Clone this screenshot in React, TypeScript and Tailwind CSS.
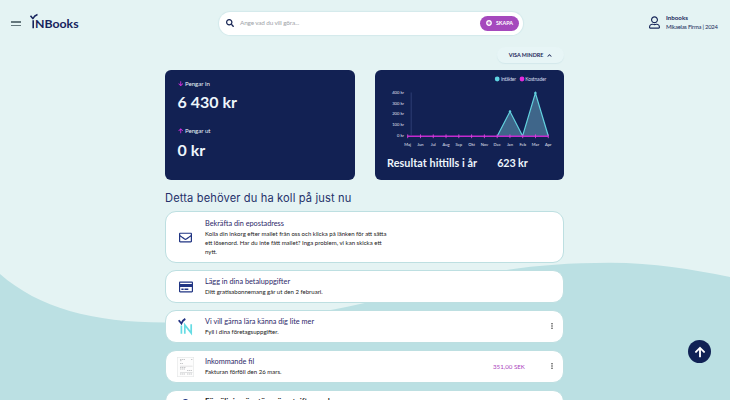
import React from "react";
import { FaSearch, FaPlusCircle, FaRegUser, FaRegEnvelope, FaArrowUp, FaArrowDown, FaChevronUp, FaRegCreditCard } from "react-icons/fa";

const months = ["Maj", "Jun", "Jul", "Aug", "Sep", "Okt", "Nov", "Dec", "Jan", "Feb", "Mar", "Apr"];
const ticks = ["400 kr", "300 kr", "200 kr", "100 kr", "0 kr"];

function Logo() {
  return (
    <svg width="50" height="17" viewBox="0 0 50 17" className="mb-[2px] ml-[9px] block overflow-visible" aria-label="iNBooks">
      <path d="M0.5 1.8L3.2 5M2.7 5C3.8 2.7 5 1.4 7.5 0.5" stroke="#16235c" strokeWidth="1.5" fill="none" />
      <path d="M3.2 6.3V14.3" stroke="#16235c" strokeWidth="1.6" />
      <text x="5" y="14.3" textLength="43.6" lengthAdjust="spacingAndGlyphs" fontSize="12" fontWeight="700" fill="#16235c">NBooks</text>
    </svg>
  );
}

function Header() {
  return (
    <header className="flex h-[46px] items-center pl-[11px]">
      <div className="flex w-[208px] items-center">
        <div className="mt-px flex h-[5px] w-[10px] flex-col justify-between">
          <i className="h-[1.5px] bg-[#64777c]" />
          <i className="h-[1.5px] bg-[#64777c]" />
        </div>
        <Logo />
      </div>
      <div className="flex h-[23px] w-[304px] items-center rounded-full bg-white pl-[7px] pr-[4px] shadow-[0_0_1px_1px_#d3e9eb]">
        <FaSearch className="size-[8px] text-[#182554]" />
        <span className="ml-[6px] flex-1 text-[6.4px] tracking-[-0.15px] text-[#a0a3a8]">Ange vad du vill göra...</span>
        <button className="flex h-[15px] w-[39px] items-center justify-center gap-[4px] rounded-full bg-[#a549bd] text-[5.4px] font-bold text-white">
          <FaPlusCircle className="size-[6px]" />
          <span>SKAPA</span>
        </button>
      </div>
      <div className="mb-[2px] ml-[126px] flex items-center gap-[6px]">
        <FaRegUser className="h-[13px] w-[11px] text-[#1b2a5c]" />
        <div className="whitespace-nowrap text-[5.9px] leading-[9px] text-[#1b2a5c]">
          <div className="mt-[-1px] text-[6.2px] font-bold">Inbooks</div>
          <div className="tracking-[-0.26px]">Mikaelas Firma | 2024</div>
        </div>
      </div>
    </header>
  );
}

function Chart() {
  return (
    <svg width="189" height="110" viewBox="375 70 189 110" className="block">
      <circle cx="497.2" cy="79" r="2.4" fill="#5fd4e2" />
      <text x="501" y="81" fontSize="5" textLength="15" fill="#d3d9eb">Intäkter</text>
      <circle cx="522" cy="79" r="2.4" fill="#e32bdc" />
      <text x="525.3" y="81" fontSize="5" textLength="21" fill="#d3d9eb">Kostnader</text>
      {ticks.map((t, i) => (
        <text key={t} x="404" y={93.7 + i * 10.8} fontSize="4.1" textAnchor="end" fill="#e0e5f3">{t}</text>
      ))}
      <path d="M411.2 92.5V135" stroke="#394a83" strokeWidth="0.7" />
      <path d="M497.3 136L510 111.5L522.6 136L535.4 93L548.3 136Z" fill="#3f668a" />
      <path d="M497.3 136L510 111.5L522.6 136L535.4 93L548.3 136" fill="none" stroke="#62d2df" strokeWidth="1.2" />
      <circle cx="510" cy="111.5" r="1.2" fill="#62d2df" />
      <circle cx="535.4" cy="93" r="1.2" fill="#62d2df" />
      <path d="M407.5 136.2H548.3" stroke="#c42bcf" strokeWidth="1.5" />
      {months.map((m, i) => (
        <g key={m}>
          <path d={`M${407.7 + i * 12.78} 134.4v3.8`} stroke="#d646dd" strokeWidth="0.9" />
          <text x={407.7 + i * 12.78} y="145.6" fontSize="4.1" textAnchor="middle" fill="#e0e5f3">{m}</text>
        </g>
      ))}
      <text x="387" y="166.7" fontSize="10.8" fontWeight="700" textLength="90" fill="#edf5fb">Resultat hittills i år</text>
      <text x="497.2" y="166.7" fontSize="10.8" fontWeight="700" textLength="30.6" fill="#edf5fb">623 kr</text>
    </svg>
  );
}

function Receipt() {
  return (
    <svg width="17" height="20" viewBox="0 0 17 20">
      <rect x="0.3" y="0.3" width="16.4" height="19.4" fill="#fdfdfd" stroke="#e4e6e7" strokeWidth="0.6" />
      <path d="M3 2.5h5M3 3.7h2M3 6.5h3M14 2.5h1.5M3 10.5h6M3 12h5M10 13.5h5M3 17h5M10 17h5" stroke="#a2a5a8" strokeWidth="0.6" strokeDasharray="1.4 .5" />
      <path d="M3 9.2h12.5M3 15.5h12.5" stroke="#c3c5c7" strokeWidth="0.5" />
    </svg>
  );
}

function BrandMark() {
  return (
    <svg width="15" height="17" viewBox="0 0 15 17" className="overflow-visible">
      <path d="M0.7 2.2L3.4 5.5C4.1 3.3 5.4 1.9 7.3 .9" fill="none" stroke="#202f80" strokeWidth="1.8" />
      <path d="M3.4 7.4V15.8M6.8 15.8V7L13.2 15V6.2" fill="none" stroke="#65dce4" strokeWidth="1.7" />
    </svg>
  );
}

function Dots() {
  return (
    <svg width="4" height="8" viewBox="0 0 4 8" className="mb-px ml-[13px]">
      <circle cx="2" cy="1.7" r="0.75" fill="#333" />
      <circle cx="2" cy="4" r="0.75" fill="#333" />
      <circle cx="2" cy="6.3" r="0.75" fill="#333" />
    </svg>
  );
}

type ItemProps = { icon: React.ReactNode; title: string; children: React.ReactNode; amount?: string; menu?: boolean; tall?: boolean };

function Item({ icon, title, children, amount, menu, tall }: ItemProps) {
  return (
    <article className={`flex w-[399px] shrink-0 items-center rounded-[11px] border border-[#bddfe1] bg-white ${tall ? "h-[52px]" : "h-[33px]"}`}>
      <div className="flex w-[39px] shrink-0 items-center justify-center text-[#213583]">{icon}</div>
      <div className="w-[270px] whitespace-nowrap pt-[1px]">
        <h3 className="text-[7.3px] leading-[10px] text-[#2c2869]">{title}</h3>
        <div className="text-[6.05px] leading-[9.3px] text-[#222]">{children}</div>
      </div>
      <div className="ml-[18px] w-[44px] text-[6.2px] text-[#ac45be]">{amount}</div>
      {menu && <Dots />}
    </article>
  );
}

export default function App() {
  return (
    <div className="relative isolate h-[400px] w-[730px] overflow-hidden bg-[#e4f3f3] font-['Lato',sans-serif]">
      <svg className="absolute inset-0 -z-10" width="730" height="400" viewBox="0 0 730 400">
        <path d="M0 274C39 308 92 322.5 165 322.5C255 322.5 305 316 360 304C425 290 485 262.8 610 262.8C655 263 690 269 730 277V400H0Z" fill="#bbe0e3" />
      </svg>
      <Header />
      <main className="ml-[165px] w-[399px]">
        <div className="flex h-[24px] justify-end">
          <button className="mt-[1px] flex h-[16px] w-[67px] items-center justify-center gap-[4px] rounded-full bg-[#e7f5f6] pt-px text-[5.4px] font-bold text-[#1b2858] shadow-[0_1px_1px_#d3e8eb]">
            VISA MINDRE <FaChevronUp className="size-[5px]" />
          </button>
        </div>
        <div className="flex justify-between">
          <section className="flex h-[110px] w-[190px] flex-col rounded-[6px] bg-[#122153] pl-[12.5px] pt-[7.5px] text-[#edf5fb]">
            <div className="flex h-[12px] items-center gap-[2px] text-[6.1px]"><FaArrowDown className="size-[5.5px] text-[#d82de0]" />Pengar in</div>
            <strong className="mt-[1.5px] block h-[21px] text-[16px] leading-[21px]">6 430 kr</strong>
            <div className="mt-[13px] flex h-[12px] items-center gap-[2px] text-[6.1px]"><FaArrowUp className="size-[5.5px] text-[#d82de0]" />Pengar ut</div>
            <strong className="mt-[1.5px] block h-[21px] text-[16px] leading-[21px]">0 kr</strong>
          </section>
          <section className="h-[110px] w-[189px] rounded-[6px] bg-[#122153]"><Chart /></section>
        </div>
        <h2 className="flex h-[31px] items-center whitespace-nowrap pt-[6px] font-['Inter',sans-serif] text-[11.1px] tracking-[0.14px] text-[#25316a]">Detta behöver du ha koll på just nu</h2>
        <div className="flex flex-col gap-[7px]">
          <Item tall icon={<FaRegEnvelope className="size-[13px]" />} title="Bekräfta din epostadress">
            Kolla din inkorg efter mailet från oss och klicka på länken för att sätta<br />ett lösenord. Har du inte fått mailet? Inga problem, vi kan skicka ett<br />nytt.
          </Item>
          <Item icon={<FaRegCreditCard className="size-[14px]" />} title="Lägg in dina betaluppgifter">Ditt gratisabonnemang går ut den 2 februari.</Item>
          <Item menu icon={<BrandMark />} title="Vi vill gärna lära känna dig lite mer">Fyll i dina företagsuppgifter.</Item>
          <Item menu icon={<Receipt />} title="Inkommande fil" amount="351,00 SEK">Fakturan förföll den 26 mars.</Item>
          <article className="flex h-[33px] w-[399px] shrink-0 rounded-[11px] border border-[#bddfe1] bg-white">
            <div className="flex w-[39px] justify-center pt-[8px] text-[#213583]"><FaRegUser className="size-[13px]" /></div>
            <h3 className="whitespace-nowrap pt-[5px] text-[8px] font-bold leading-[10px] text-[#222]">Försäljning är större än utgifterna den</h3>
          </article>
        </div>
      </main>
      <button className="absolute left-[688px] top-[340px] flex size-[23px] items-center justify-center rounded-full bg-[#102255] text-white" aria-label="Till toppen">
        <FaArrowUp className="size-[12px]" />
      </button>
    </div>
  );
}
